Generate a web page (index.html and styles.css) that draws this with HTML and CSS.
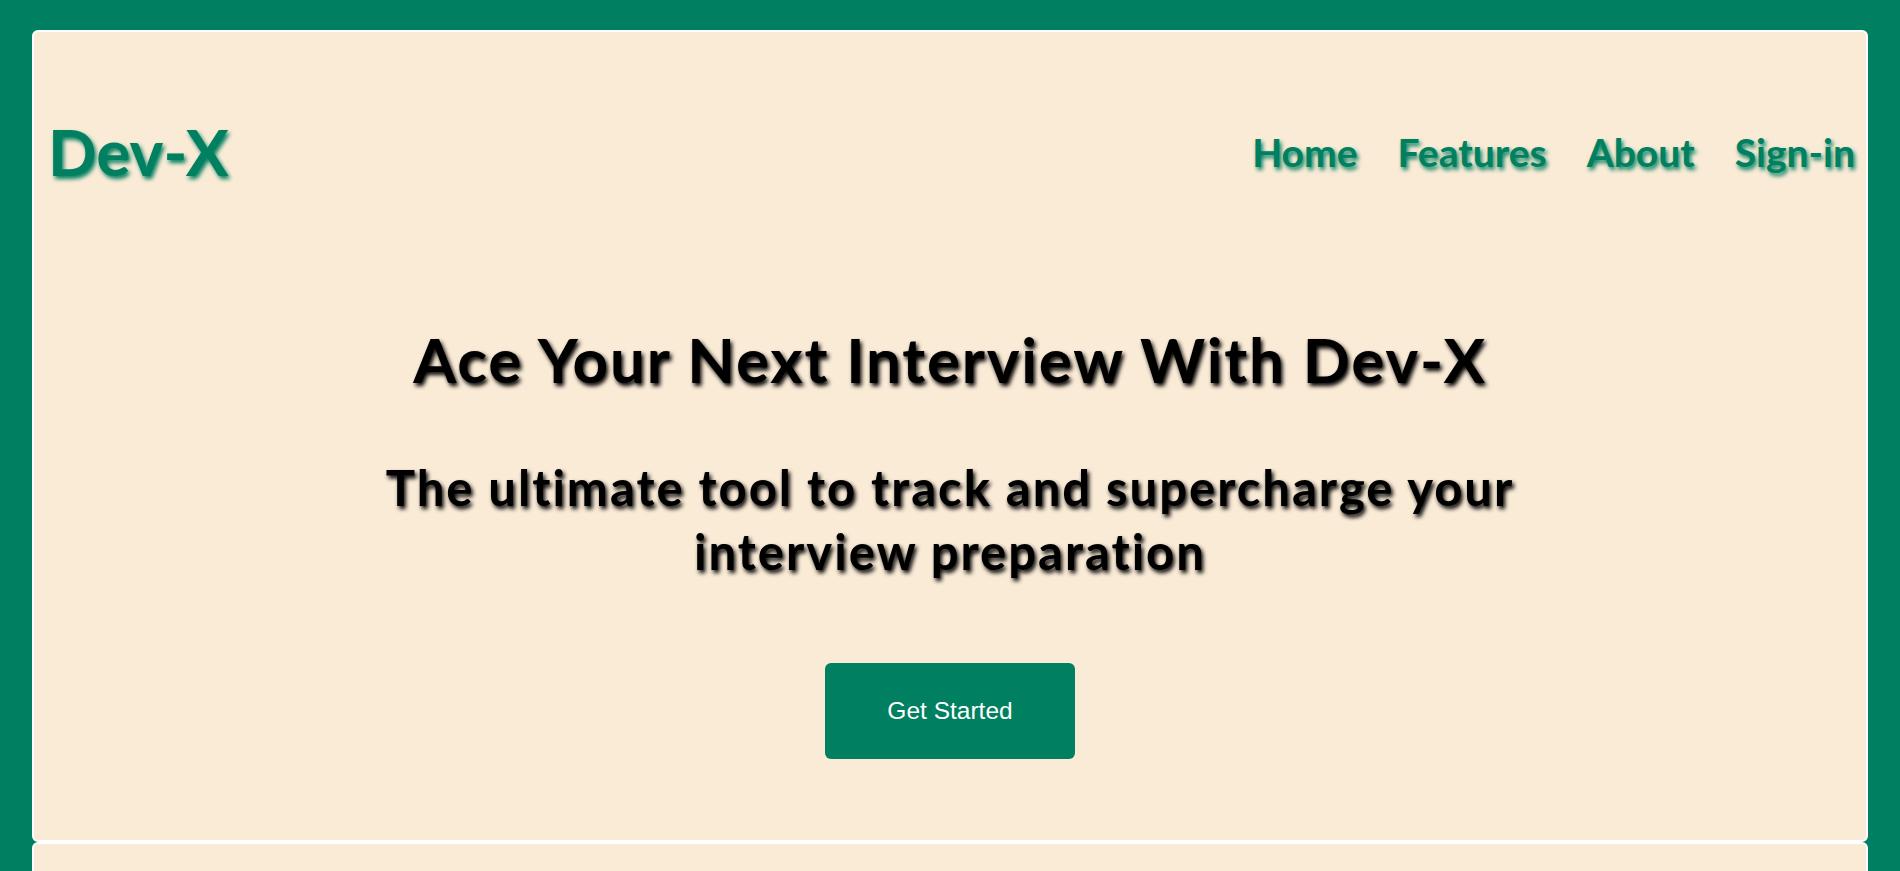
FILE: index.html
```html
<!DOCTYPE html>
<html lang="en">
<head>
<meta charset="utf-8">
<title>Dev-X</title>
<link rel="stylesheet" href="styles.css">
</head>
<body>
  <section class="card hero-card">
    <header class="topbar">
      <div class="logo">Dev-X</div>
      <nav class="nav">
        <a href="#" class="nav-link">Home</a>
        <a href="#" class="nav-link">Features</a>
        <a href="#" class="nav-link">About</a>
        <a href="#" class="nav-link">Sign-in</a>
      </nav>
    </header>
    <div class="hero">
      <h1 class="hero-title">Ace Your Next Interview With Dev-X</h1>
      <h2 class="hero-sub">The ultimate tool to track and supercharge your interview preparation</h2>
      <button class="cta">Get Started</button>
    </div>
  </section>
  <section class="card next-card"></section>
</body>
</html>
```

FILE: styles.css
```css
html, body {
  margin: 0;
  padding: 0;
}
body {
  background: #008060;
  padding: 30px 32px 0 32px;
  font-family: "Lato", "Open Sans", sans-serif;
}
.card {
  background: #faebd7;
  border: 2px solid #ffffff;
  border-radius: 6px;
}
.hero-card {
  padding-bottom: 81px;
}
.next-card {
  min-height: 300px;
}
.topbar {
  display: flex;
  justify-content: space-between;
  align-items: center;
  padding: 80px 11px 80px 14px;
  height: 80px;
}
.logo {
  font-size: 64px;
  line-height: 80px;
  font-weight: 700;
  color: #008060;
  text-shadow: 2px 3px 4px;
}
.nav {
  display: flex;
  gap: 40px;
  align-items: center;
}
.nav-link {
  font-size: 39px;
  font-weight: 700;
  color: #008060;
  text-decoration: none;
  text-shadow: 2px 3px 4px;
}
.hero {
  display: flex;
  flex-direction: column;
  align-items: center;
  text-align: center;
}
.hero-title {
  margin: 50px 0 0 0;
  font-size: 62px;
  line-height: 1.2;
  letter-spacing: 1.8px;
  font-weight: 700;
  color: #000;
  text-shadow: 2px 3px 4px;
}
.hero-sub {
  margin: 59px 0 0 0;
  max-width: 1260px;
  font-size: 49px;
  line-height: 64px;
  letter-spacing: 2px;
  font-weight: 700;
  color: #000;
  text-shadow: 2px 3px 4px;
}
.cta {
  margin-top: 80px;
  width: 250px;
  height: 96px;
  border: none;
  border-radius: 6px;
  background: #008060;
  color: #ffffff;
  font-family: "Liberation Sans", Arial, sans-serif;
  font-size: 24.5px;
  cursor: pointer;
}
```
